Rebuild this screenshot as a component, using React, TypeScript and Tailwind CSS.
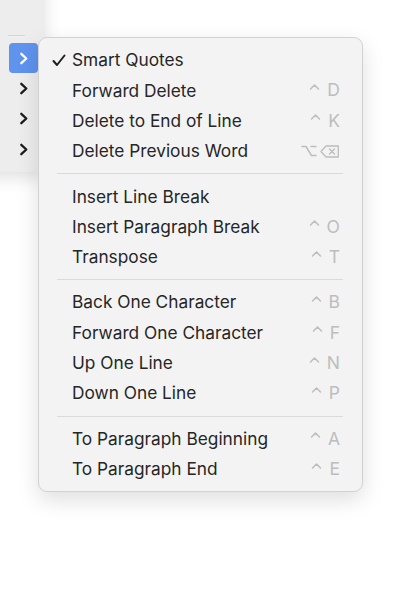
import React from "react";

type Item =
  | { type: "item"; label: string; check?: boolean; key?: string; special?: "optdel" }
  | { type: "sep" };

const items: Item[] = [
  { type: "item", label: "Smart Quotes", check: true },
  { type: "item", label: "Forward Delete", key: "D" },
  { type: "item", label: "Delete to End of Line", key: "K" },
  { type: "item", label: "Delete Previous Word", special: "optdel" },
  { type: "sep" },
  { type: "item", label: "Insert Line Break" },
  { type: "item", label: "Insert Paragraph Break", key: "O" },
  { type: "item", label: "Transpose", key: "T" },
  { type: "sep" },
  { type: "item", label: "Back One Character", key: "B" },
  { type: "item", label: "Forward One Character", key: "F" },
  { type: "item", label: "Up One Line", key: "N" },
  { type: "item", label: "Down One Line", key: "P" },
  { type: "sep" },
  { type: "item", label: "To Paragraph Beginning", key: "A" },
  { type: "item", label: "To Paragraph End", key: "E" },
];

function Chevron({ color }: { color: string }) {
  return (
    <svg width="10" height="13" viewBox="0 0 10 13" fill="none">
      <path d="M2.3 1.8 L7.3 6.5 L2.3 11.2" stroke={color} strokeWidth="2.3" strokeLinecap="round" strokeLinejoin="round" />
    </svg>
  );
}

function Caret() {
  return (
    <svg width="11" height="8" viewBox="0 0 11 8" fill="none" className="mb-[7px]">
      <path d="M1.5 6 L5.5 2 L9.5 6" stroke="#bdbdbd" strokeWidth="1.5" strokeLinecap="round" strokeLinejoin="round" />
    </svg>
  );
}

function OptDel() {
  return (
    <div className="flex items-center gap-[3px]">
      <svg width="16" height="12" viewBox="0 0 16 12" fill="none">
        <path d="M1 1.5 H5 L10.5 10.5 H15 M10 1.5 H15" stroke="#bdbdbd" strokeWidth="1.5" strokeLinecap="round" strokeLinejoin="round" />
      </svg>
      <svg width="20" height="13" viewBox="0 0 20 13" fill="none">
        <path d="M6 1 H18.3 V12 H6 L1 6.5 Z" stroke="#bdbdbd" strokeWidth="1.3" strokeLinejoin="round" />
        <path d="M9.5 4 L14.5 9 M14.5 4 L9.5 9" stroke="#bdbdbd" strokeWidth="1.4" strokeLinecap="round" />
      </svg>
    </div>
  );
}

function Check() {
  return (
    <svg width="14" height="13" viewBox="0 0 14 13" fill="none">
      <path d="M1.5 7 L5 11 L12.5 1.5" stroke="#1f1f1f" strokeWidth="2" strokeLinecap="round" strokeLinejoin="round" />
    </svg>
  );
}

export default function App() {
  return (
    <div
      className="relative w-[400px] h-[600px] overflow-hidden bg-white"
      style={{ fontFamily: "Inter, 'Liberation Sans', sans-serif" }}
    >
      {/* parent menu */}
      <div className="absolute left-[-200px] top-[-40px] w-[245px] h-[212px] bg-[#ededed] shadow-[0_6px_16px_rgba(0,0,0,0.12)] flex flex-col items-end pr-[7px]">
        <div className="h-[76px] w-full flex items-end justify-end pr-[13px]">
          <div className="w-[17px] h-px bg-[#d6d6d6]" />
        </div>
        <div className="h-[7px]" />
        <div className="flex flex-col w-[29px]">
          {[0, 1, 2, 3].map((i) => (
            <div
              key={i}
              className={
                i === 0
                  ? "h-[30px] flex items-center justify-center bg-[#5f93ee] rounded-[4px]"
                  : "h-[30.5px] flex items-center justify-center"
              }
            >
              <Chevron color={i === 0 ? "#ffffff" : "#1c1c1c"} />
            </div>
          ))}
        </div>
      </div>

      {/* submenu */}
      <div className="absolute left-[38px] top-[37px] w-[325px] rounded-[9px] border border-[#d2d2d2] bg-[#f3f3f3] shadow-[0_8px_22px_rgba(0,0,0,0.13)] pt-[7px] pb-[7px]">
        {items.map((it, idx) =>
          it.type === "sep" ? (
            <div key={idx} className="h-[15px] flex items-center pl-[18px] pr-[19px]">
              <div className="h-px w-full bg-[#dadada]" />
            </div>
          ) : (
            <div key={idx} className="relative h-[30.33px] flex items-center pl-[33px] pr-[22px]">
              {it.check && (
                <div className="absolute left-[13px] top-[9px]">
                  <Check />
                </div>
              )}
              <span className="flex-1 text-[17.3px] text-[#262626]">{it.label}</span>
              {it.key && (
                <div className="flex items-center gap-[7px]">
                  <Caret />
                  <span className="text-[17.5px] text-[#bdbdbd]">{it.key}</span>
                </div>
              )}
              {it.special === "optdel" && <OptDel />}
            </div>
          )
        )}
      </div>
    </div>
  );
}
